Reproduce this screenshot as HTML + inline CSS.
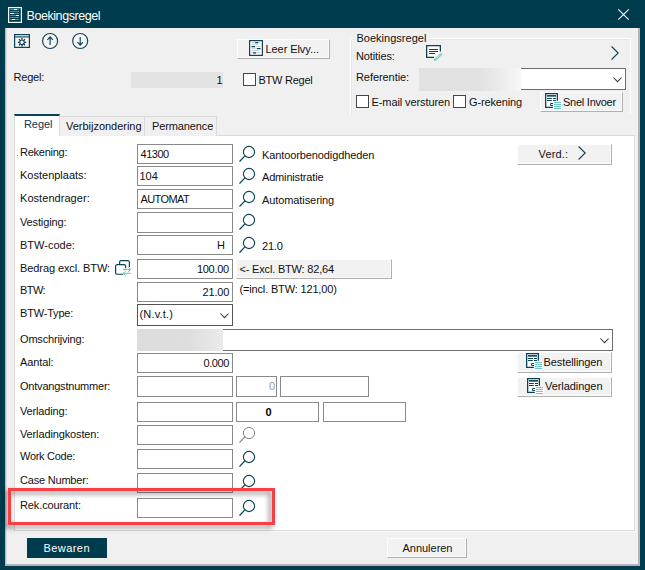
<!DOCTYPE html>
<html lang="nl">
<head>
<meta charset="utf-8">
<title>Boekingsregel</title>
<style>
*{box-sizing:border-box;margin:0;padding:0}
html,body{width:645px;height:570px;overflow:hidden}
body{background:#003c4e;position:relative;font-family:"Liberation Sans",sans-serif;font-size:11px;color:#101010}
#client{position:absolute;left:6px;top:28px;width:632px;height:536px;background:#f0f0f0}
#edgeL{position:absolute;left:5px;top:28px;width:2px;height:537px;background:linear-gradient(90deg,#c0baba 0,#c0baba 50%,#dddada 50%,#dddada 100%)}
#edgeR{position:absolute;left:638px;top:28px;width:2px;height:537px;background:#b5b3b3}
#edgeB{position:absolute;left:5px;top:564px;width:635px;height:1.5px;background:#b5b3b3}
.t{position:absolute;white-space:nowrap;line-height:13px;height:13px}
.inp{position:absolute;background:#fff;border:1px solid #8a8a8a}
.btn{position:absolute;background:#f2f2f2;border:1px solid;border-color:#fdfdfd #b0b0b0 #b0b0b0 #fdfdfd;box-shadow:inset -1px -1px 0 #fafafa}
.cb{position:absolute;width:13px;height:13px;background:#fff;border:1px solid #454545}
svg{position:absolute;overflow:visible}
#panel{position:absolute;left:14px;top:135px;width:621px;height:396px;background:#fff;border:1px solid #dadada;box-shadow:1px 1px 0 #f9f9f9}
.tab{position:absolute;top:116px;height:20px;background:#f0f0f0;border:1px solid #d9d9d9;border-bottom:none}
</style>
</head>
<body>
<div id="client"></div>
<div id="edgeL"></div><div id="edgeR"></div><div id="edgeB"></div>

<!-- title bar -->
<svg style="left:8px;top:7px" width="14" height="16" viewBox="0 0 14 16">
<rect x="0.6" y="0.6" width="12.8" height="14.8" fill="none" stroke="#fff" stroke-width="1.2"/>
<path d="M2.2 2.5H11M2.2 4.5H11M2.2 6.5H11M2.2 8.5H11M2.2 10.5H11M2.2 12.5H11" stroke="#6f8f9a" stroke-width="0.9"/>
<path d="M6 2.5H9M2.2 6.5H6M8 8.5H11M4 12.5H7" stroke="#fff" stroke-width="1.1"/>
</svg>
<svg style="left:618px;top:9px" width="11" height="11" viewBox="0 0 11 11"><path d="M0.3 0.3L10.7 10.7M10.7 0.3L0.3 10.7" stroke="#fff" stroke-width="1.1" fill="none"/></svg>

<!-- toolbar icons -->
<svg style="left:14px;top:34px" width="16" height="14" viewBox="0 0 16 14">
<rect x="0.6" y="0.6" width="14.8" height="12.8" fill="#f6f6f6" stroke="#0b4256" stroke-width="1.2"/>
<path d="M0.6 2.9H15.4" stroke="#0b4256" stroke-width="1.1"/>
<circle cx="8" cy="8.3" r="2.3" fill="none" stroke="#0b4256" stroke-width="1.2"/>
<path d="M8 4.1V5.6M8 11V12.5M3.8 8.3H5.3M10.7 8.3H12.2M5 5.3L6.1 6.4M9.9 10.2L11 11.3M11 5.3L9.9 6.4M6.1 10.2L5 11.3" stroke="#0b4256" stroke-width="1.25"/>
</svg>
<svg style="left:42px;top:33px" width="16" height="16" viewBox="0 0 16 16">
<circle cx="8.1" cy="8" r="7.5" fill="#f6f6f6" stroke="#0b4256" stroke-width="1.15"/>
<path d="M8.1 3.9V12M5.4 6.8L8.1 3.9L10.8 6.8" fill="none" stroke="#0b4256" stroke-width="1.15"/>
</svg>
<svg style="left:72px;top:33px" width="16" height="16" viewBox="0 0 16 16">
<circle cx="8.2" cy="8" r="7.5" fill="#f6f6f6" stroke="#0b4256" stroke-width="1.15"/>
<path d="M8.2 4V12.1M5.5 9.2L8.2 12.1L10.9 9.2" fill="none" stroke="#0b4256" stroke-width="1.15"/>
</svg>

<!-- Leer Elvy button -->
<div class="btn" style="left:237px;top:39px;width:93px;height:20px"></div>
<svg style="left:249px;top:40px" width="14" height="16" viewBox="0 0 14 16">
<rect x="0.6" y="0.6" width="12.8" height="14.8" fill="#fff" stroke="#0b4256" stroke-width="1.2"/>
<path d="M2.5 2.6H11.5M2.5 4.4H9M2.5 6.6H11.5M2.5 8.7H11.5M2.5 10.5H9M2.5 12.8H11.5" stroke="#a9bcc2" stroke-width="0.7"/>
<path d="M6.2 2.6H9.2M2.5 6.6H6M8 8.7H11.5M4 12.8H7" stroke="#0b4256" stroke-width="1.25"/>
</svg>

<!-- Regel row -->
<div style="position:absolute;left:131px;top:72px;width:92px;height:16px;background:#e3e3e3"></div>
<div class="cb" style="left:243px;top:73px"></div>

<!-- group box -->
<div style="position:absolute;left:350px;top:38px;width:281px;height:76px;border:1px solid #fff;border-bottom:none;box-shadow:inset 1px 1px 0 #e6e6e6"></div>
<div style="position:absolute;left:355px;top:36px;width:73px;height:6px;background:#f0f0f0"></div>
<svg style="left:426px;top:45px" width="17" height="17" viewBox="0 0 17 17">
<rect x="0.6" y="0.6" width="13.8" height="11.8" fill="#fbfbfb"/>
<path d="M14.35 6.6V0.65H0.65V12.35H8" fill="none" stroke="#0b4256" stroke-width="1.3"/>
<path d="M3.1 4.5H12M3.1 6.5H12M3.1 8.5H8.9" stroke="#0b4256" stroke-width="1.1"/>
<path d="M9 14.9L15 9.3" stroke="#7fd0cc" stroke-width="2.5" stroke-linecap="round"/>
<path d="M9.8 14.1L14.6 9.7" stroke="#fff" stroke-width="0.7" stroke-dasharray="0.9 0.9"/>
</svg>
<svg style="left:611px;top:46px" width="8" height="14" viewBox="0 0 8 14"><path d="M0.6 0.5L7.2 7L0.6 13.5" fill="none" stroke="#0b4256" stroke-width="1.1"/></svg>
<div style="position:absolute;left:500px;top:68px;width:126px;height:22px;background:#fff;border:1px solid #6e6e6e"></div>
<div style="position:absolute;left:419px;top:68px;width:102px;height:23px;background:linear-gradient(90deg,#e1e1e1 0%,#e1e1e1 58%,#f6f6f6 100%)"></div>
<svg style="left:613px;top:77px" width="9" height="6" viewBox="0 0 9 6"><path d="M0.4 0.5L4.5 4.7L8.6 0.5" fill="none" stroke="#3c3c3c" stroke-width="1.05"/></svg>
<div class="cb" style="left:356px;top:95px"></div>
<div class="cb" style="left:453px;top:95px"></div>
<div class="btn" style="left:540px;top:92px;width:83px;height:20px"></div>
<svg style="left:545px;top:93px" width="17" height="17" viewBox="0 0 17 17">
<path d="M0.65 0.65H12.35V14.35H0.65z" fill="#fff" stroke="none"/>
<path d="M12.35 7.7V0.65H0.65V14.35H7.9" fill="none" stroke="#0b4256" stroke-width="1.3"/>
<path d="M2 2.85H11" stroke="#0b4256" stroke-width="1.6"/>
<path d="M2 5.5H6.8M8 5.5H11M2 7.5H6.8M8 7.5H11" stroke="#0b4256" stroke-width="1.1"/>
<path d="M8.2 10.5H5.6V12.5H8.2" fill="none" stroke="#0b4256" stroke-width="1"/>
<rect x="8.4" y="8.7" width="8.3" height="7.6" fill="#fff"/>
<path d="M8.9 9.5H16M8.9 11.5H16M8.9 13.5H16M8.9 15.5H16" stroke="#58c3bd" stroke-width="0.9"/>
</svg>

<!-- tabs -->
<div id="panel"></div>
<div class="tab" style="left:59px;width:86px"></div>
<div class="tab" style="left:144px;width:73px"></div>
<div class="tab" style="left:14px;top:114px;width:46px;height:22px;background:#fff;border-top:2px solid #0b4256;border-color:#0b4256 #d9d9d9 #fff #d9d9d9"></div>
<div style="position:absolute;left:17px;top:155px;width:1px;height:1px;background:#999"></div>

<!-- inputs -->
<div class="inp" style="left:137px;top:144px;width:96px;height:20px;"></div><div class="inp" style="left:137px;top:166px;width:96px;height:20px;"></div><div class="inp" style="left:137px;top:189px;width:96px;height:20px;"></div><div class="inp" style="left:137px;top:212px;width:96px;height:21px;"></div><div class="inp" style="left:137px;top:235px;width:96px;height:20px;"></div><div class="inp" style="left:137px;top:259px;width:96px;height:20px;"></div><div class="inp" style="left:137px;top:282px;width:96px;height:20px;"></div>
<div class="inp" style="left:137px;top:304px;width:96px;height:22px;border-color:#555"></div>
<svg style="left:220px;top:313px" width="9" height="6" viewBox="0 0 9 6"><path d="M0.4 0.5L4.5 4.7L8.6 0.5" fill="none" stroke="#3c3c3c" stroke-width="1.05"/></svg>
<div style="position:absolute;left:222px;top:329px;width:391px;height:22px;background:#fff;border:1px solid #6e6e6e"></div>
<div style="position:absolute;left:137px;top:329px;width:86px;height:22px;background:linear-gradient(90deg,#dcdcdc 0%,#dedede 60%,#eaeaea 100%)"></div>
<svg style="left:600px;top:338px" width="9" height="6" viewBox="0 0 9 6"><path d="M0.4 0.5L4.5 4.7L8.6 0.5" fill="none" stroke="#3c3c3c" stroke-width="1.05"/></svg>
<div class="inp" style="left:137px;top:353px;width:96px;height:20px;"></div>
<div class="inp" style="left:137px;top:376px;width:96px;height:21px;"></div><div class="inp" style="left:236px;top:376px;width:41px;height:21px;"></div><div class="inp" style="left:280px;top:376px;width:89px;height:21px;"></div>
<div class="inp" style="left:137px;top:402px;width:96px;height:20px;"></div><div class="inp" style="left:236px;top:402px;width:83px;height:20px;"></div><div class="inp" style="left:323px;top:402px;width:83px;height:20px;"></div>
<div class="inp" style="left:137px;top:425px;width:96px;height:20px;"></div><div class="inp" style="left:137px;top:449px;width:96px;height:20px;"></div><div class="inp" style="left:137px;top:473px;width:96px;height:20px;"></div><div class="inp" style="left:137px;top:498px;width:96px;height:20px;"></div>

<!-- magnifiers -->
<svg style="left:239px;top:146px" width="18" height="17" viewBox="0 0 18 17"><circle cx="10" cy="6" r="5.6" fill="none" stroke="#0b4256" stroke-width="1.15"/><path d="M5.9 9.9L0.8 15.2" stroke="#0b4256" stroke-width="1.25" stroke-linecap="round"/></svg><svg style="left:239px;top:168px" width="18" height="17" viewBox="0 0 18 17"><circle cx="10" cy="6" r="5.6" fill="none" stroke="#0b4256" stroke-width="1.15"/><path d="M5.9 9.9L0.8 15.2" stroke="#0b4256" stroke-width="1.25" stroke-linecap="round"/></svg><svg style="left:239px;top:191px" width="18" height="17" viewBox="0 0 18 17"><circle cx="10" cy="6" r="5.6" fill="none" stroke="#0b4256" stroke-width="1.15"/><path d="M5.9 9.9L0.8 15.2" stroke="#0b4256" stroke-width="1.25" stroke-linecap="round"/></svg><svg style="left:239px;top:214px" width="18" height="17" viewBox="0 0 18 17"><circle cx="10" cy="6" r="5.6" fill="none" stroke="#0b4256" stroke-width="1.15"/><path d="M5.9 9.9L0.8 15.2" stroke="#0b4256" stroke-width="1.25" stroke-linecap="round"/></svg><svg style="left:239px;top:237px" width="18" height="17" viewBox="0 0 18 17"><circle cx="10" cy="6" r="5.6" fill="none" stroke="#0b4256" stroke-width="1.15"/><path d="M5.9 9.9L0.8 15.2" stroke="#0b4256" stroke-width="1.25" stroke-linecap="round"/></svg>
<svg style="left:239px;top:427px" width="18" height="17" viewBox="0 0 18 17"><circle cx="10" cy="6" r="5.6" fill="none" stroke="#7d7d7d" stroke-width="0.95"/><path d="M5.9 9.9L0.8 15.2" stroke="#7d7d7d" stroke-width="1.05" stroke-linecap="round"/></svg><svg style="left:239px;top:451px" width="18" height="17" viewBox="0 0 18 17"><circle cx="10" cy="6" r="5.6" fill="none" stroke="#0b4256" stroke-width="1.15"/><path d="M5.9 9.9L0.8 15.2" stroke="#0b4256" stroke-width="1.25" stroke-linecap="round"/></svg><svg style="left:239px;top:475px" width="18" height="17" viewBox="0 0 18 17"><circle cx="10" cy="6" r="5.6" fill="none" stroke="#0b4256" stroke-width="1.15"/><path d="M5.9 9.9L0.8 15.2" stroke="#0b4256" stroke-width="1.25" stroke-linecap="round"/></svg><svg style="left:239px;top:500px" width="18" height="17" viewBox="0 0 18 17"><circle cx="10" cy="6" r="5.6" fill="none" stroke="#0b4256" stroke-width="1.15"/><path d="M5.9 9.9L0.8 15.2" stroke="#0b4256" stroke-width="1.25" stroke-linecap="round"/></svg>

<!-- swap icon -->
<svg style="left:115px;top:260px" width="17" height="16" viewBox="0 0 17 16">
<path d="M4.6 4V2.2a1.6 1.6 0 0 1 1.6-1.6h6.6a1.6 1.6 0 0 1 1.6 1.6v4.3" fill="none" stroke="#0b4256" stroke-width="1.2" stroke-linecap="round"/>
<path d="M7.6 14.25H2.2a1.6 1.6 0 0 1-1.6-1.6V6.2a1.6 1.6 0 0 1 1.6-1.6h6.8a1.6 1.6 0 0 1 1.6 1.6v1.5" fill="none" stroke="#0b4256" stroke-width="1.2" stroke-linecap="round"/>
<path d="M8 9.5H15.7M13.2 7.2L15.8 9.5L13.2 11.8M8.3 13.3H15.9M10.7 11L8.1 13.3L10.7 15.6" fill="none" stroke="#5cc7c2" stroke-width="1"/>
</svg>

<!-- Excl btw button, right buttons -->
<div class="btn" style="left:236px;top:259px;width:156px;height:20px"></div>
<div class="btn" style="left:517px;top:144px;width:95px;height:21px"></div>
<svg style="left:578px;top:146px" width="8" height="14" viewBox="0 0 8 14"><path d="M0.6 0.5L7.2 7L0.6 13.5" fill="none" stroke="#0b4256" stroke-width="1.1"/></svg>
<div class="btn" style="left:517px;top:352px;width:95px;height:21px"></div>
<svg style="left:526px;top:353px" width="17" height="17" viewBox="0 0 17 17">
<path d="M0.65 0.65H12.35V14.35H0.65z" fill="#fff" stroke="none"/>
<path d="M12.35 7.7V0.65H0.65V14.35H7.9" fill="none" stroke="#0b4256" stroke-width="1.3"/>
<path d="M2 2.85H11" stroke="#0b4256" stroke-width="1.6"/>
<path d="M2 5.5H6.8M8 5.5H11M2 7.5H6.8M8 7.5H11" stroke="#0b4256" stroke-width="1.1"/>
<path d="M8.2 10.5H5.6V12.5H8.2" fill="none" stroke="#0b4256" stroke-width="1"/>
<rect x="8.4" y="8.7" width="8.3" height="7.6" fill="#fff"/>
<path d="M8.9 9.5H16M8.9 11.5H16M8.9 13.5H16M8.9 15.5H16" stroke="#58c3bd" stroke-width="0.9"/>
</svg>
<div class="btn" style="left:517px;top:377px;width:95px;height:20px"></div>
<svg style="left:527px;top:378px" width="17" height="17" viewBox="0 0 17 17">
<path d="M0.65 0.65H12.35V14.35H0.65z" fill="#fff" stroke="none"/>
<path d="M12.35 7.7V0.65H0.65V14.35H7.9" fill="none" stroke="#0b4256" stroke-width="1.3"/>
<path d="M2 2.85H11" stroke="#0b4256" stroke-width="1.6"/>
<path d="M2 5.5H6.8M8 5.5H11M2 7.5H6.8M8 7.5H11" stroke="#0b4256" stroke-width="1.1"/>
<path d="M8.2 10.5H5.6V12.5H8.2" fill="none" stroke="#0b4256" stroke-width="1"/>
<rect x="8.4" y="8.7" width="8.3" height="7.6" fill="#fff"/>
<path d="M8.9 9.5H16M8.9 11.5H16M8.9 13.5H16M8.9 15.5H16" stroke="#58c3bd" stroke-width="0.9"/>
</svg>

<!-- bottom buttons -->
<div style="position:absolute;left:27px;top:538px;width:80px;height:20px;background:#003c4e"></div>
<div class="btn" style="left:387px;top:538px;width:80px;height:20px"></div>

<!-- text -->
<div class="t" style="left:26.5px;letter-spacing:-0.43px;font-size:12.5px;color:#fff;top:9px;line-height:15px;height:15px">Boekingsregel</div>
<div class="t" style="left:265.5px;top:43px;letter-spacing:-0.07px;">Leer Elvy...</div>
<div class="t" style="left:13.5px;top:71px;letter-spacing:-0.20px;">Regel:</div>
<div class="t" style="left:216.5px;top:74px;letter-spacing:-0.20px;">1</div>
<div class="t" style="left:258.5px;top:74px;letter-spacing:-0.25px;">BTW Regel</div>
<div class="t" style="left:356.5px;top:32px;letter-spacing:0.01px;">Boekingsregel</div>
<div class="t" style="left:356.0px;top:50px;letter-spacing:-0.11px;">Notities:</div>
<div class="t" style="left:356.0px;top:71px;letter-spacing:-0.07px;">Referentie:</div>
<div class="t" style="left:371.5px;top:96px;letter-spacing:-0.09px;">E-mail versturen</div>
<div class="t" style="left:469.0px;top:96px;letter-spacing:-0.14px;">G-rekening</div>
<div class="t" style="left:563.0px;top:96px;letter-spacing:-0.25px;">Snel Invoer</div>
<div class="t" style="left:24.0px;top:118px;letter-spacing:-0.07px;color:#0b3550">Regel</div>
<div class="t" style="left:66.0px;top:120px;letter-spacing:-0.02px;">Verbijzondering</div>
<div class="t" style="left:152.0px;top:120px;letter-spacing:-0.12px;">Permanence</div>
<div class="t" style="left:20.0px;top:146px;letter-spacing:-0.25px;">Rekening:</div>
<div class="t" style="left:20.0px;top:169px;letter-spacing:-0.00px;">Kostenplaats:</div>
<div class="t" style="left:20.0px;top:192px;letter-spacing:0.05px;">Kostendrager:</div>
<div class="t" style="left:20.0px;top:216px;letter-spacing:-0.14px;">Vestiging:</div>
<div class="t" style="left:20.0px;top:239px;letter-spacing:0.00px;">BTW-code:</div>
<div class="t" style="left:20.0px;top:262px;letter-spacing:-0.09px;">Bedrag excl. BTW:</div>
<div class="t" style="left:20.0px;top:284px;letter-spacing:-0.56px;">BTW:</div>
<div class="t" style="left:20.0px;top:307px;letter-spacing:-0.18px;">BTW-Type:</div>
<div class="t" style="left:20.0px;top:333px;letter-spacing:-0.18px;">Omschrijving:</div>
<div class="t" style="left:20.0px;top:356px;letter-spacing:-0.11px;">Aantal:</div>
<div class="t" style="left:20.0px;top:380px;letter-spacing:-0.21px;">Ontvangstnummer:</div>
<div class="t" style="left:20.0px;top:405px;letter-spacing:-0.16px;">Verlading:</div>
<div class="t" style="left:20.0px;top:428px;letter-spacing:-0.13px;">Verladingkosten:</div>
<div class="t" style="left:20.0px;top:450px;letter-spacing:-0.28px;">Work Code:</div>
<div class="t" style="left:20.0px;top:474px;letter-spacing:-0.20px;">Case Number:</div>
<div class="t" style="left:20.0px;top:499px;letter-spacing:-0.12px;">Rek.courant:</div>
<div class="t" style="left:140.5px;top:148px;letter-spacing:-0.47px;">41300</div>
<div class="t" style="left:139.5px;top:170px;letter-spacing:-0.02px;">104</div>
<div class="t" style="left:140.5px;top:193px;letter-spacing:-0.59px;">AUTOMAT</div>
<div class="t" style="left:217.0px;top:239px;letter-spacing:-0.20px;">H</div>
<div class="t" style="left:197.0px;top:263px;letter-spacing:-0.31px;">100.00</div>
<div class="t" style="left:202.5px;top:286px;letter-spacing:-0.15px;">21.00</div>
<div class="t" style="left:139.5px;top:308px;letter-spacing:0.19px;">(N.v.t.)</div>
<div class="t" style="left:203.5px;top:357px;letter-spacing:-0.42px;">0.000</div>
<div class="t" style="left:269.0px;top:380px;letter-spacing:-0.20px;color:#9a9a9a">0</div>
<div class="t" style="left:265.5px;top:406px;letter-spacing:-0.20px;font-weight:bold;color:#000">0</div>
<div class="t" style="left:262.0px;top:149px;letter-spacing:-0.11px;">Kantoorbenodigdheden</div>
<div class="t" style="left:262.0px;top:171px;letter-spacing:-0.17px;">Administratie</div>
<div class="t" style="left:262.0px;top:194px;letter-spacing:-0.09px;">Automatisering</div>
<div class="t" style="left:262.0px;top:240px;letter-spacing:-0.20px;">21.0</div>
<div class="t" style="left:239.5px;top:263px;letter-spacing:-0.18px;">&lt;- Excl. BTW: 82,64</div>
<div class="t" style="left:239.5px;top:283px;letter-spacing:-0.16px;">(=incl. BTW: 121,00)</div>
<div class="t" style="left:538.5px;top:148px;letter-spacing:0.16px;">Verd.:</div>
<div class="t" style="left:543.5px;top:356px;letter-spacing:-0.09px;">Bestellingen</div>
<div class="t" style="left:545.0px;top:380px;letter-spacing:-0.06px;">Verladingen</div>
<div class="t" style="left:43.5px;top:542px;letter-spacing:0.43px;color:#fff">Bewaren</div>
<div class="t" style="left:402.5px;top:542px;letter-spacing:-0.02px;">Annuleren</div>

<!-- red highlight -->
<div style="position:absolute;left:8px;top:488px;width:267px;height:37px;border:3px solid #f93f43;filter:drop-shadow(-2.5px 3px 2.5px rgba(0,0,0,.45))"></div>
</body>
</html>
